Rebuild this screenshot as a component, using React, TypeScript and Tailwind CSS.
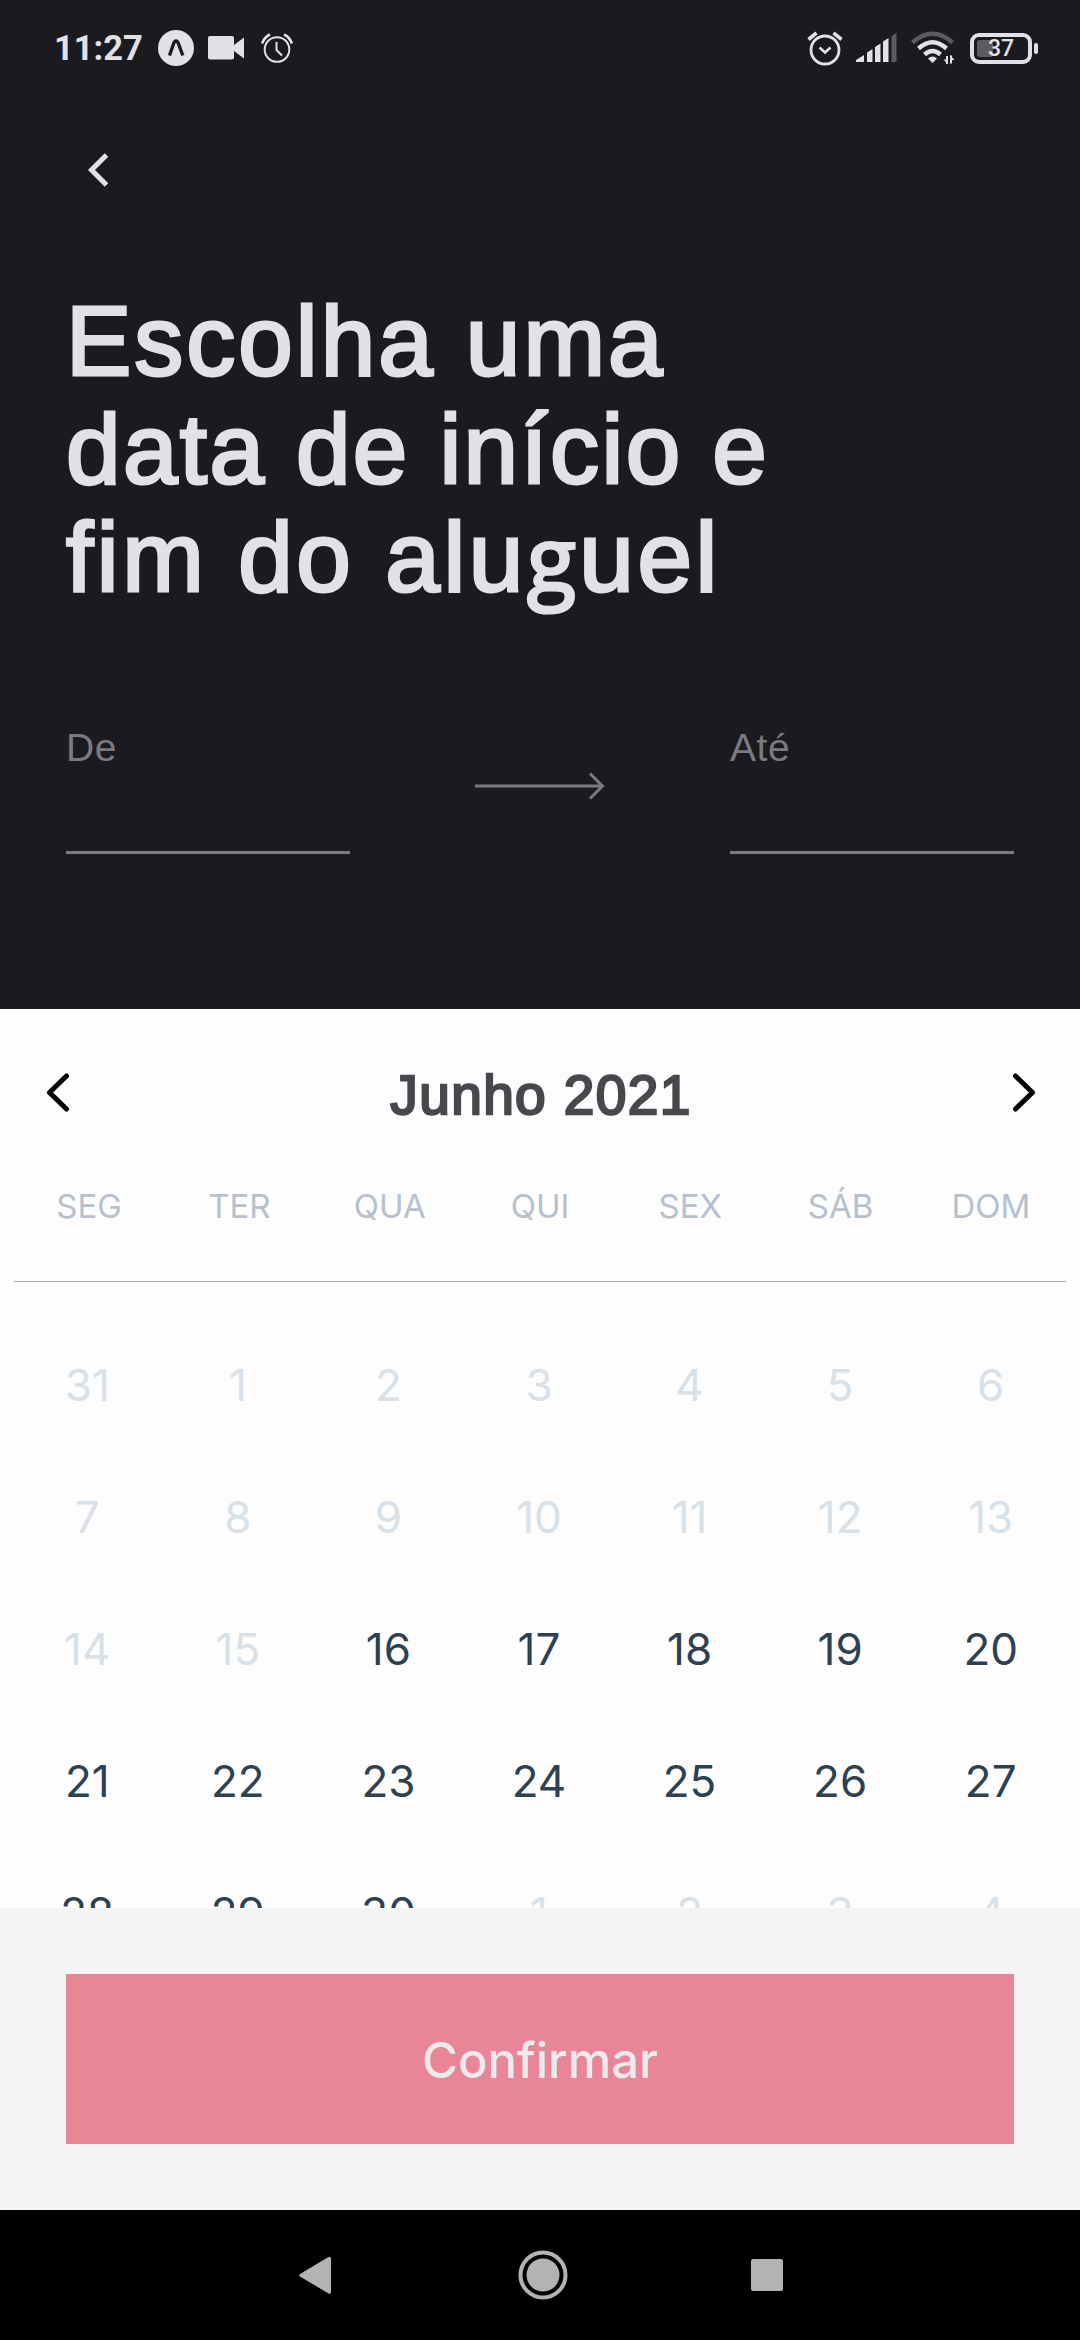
import React from "react";

const weekDays = ["SEG", "TER", "QUA", "QUI", "SEX", "SÁB", "DOM"];

const weeks = [
  [31, 1, 2, 3, 4, 5, 6],
  [7, 8, 9, 10, 11, 12, 13],
  [14, 15, 16, 17, 18, 19, 20],
  [21, 22, 23, 24, 25, 26, 27],
  [28, 29, 30, 1, 2, 3, 4],
];

function isEnabled(week: number, day: number) {
  if (week < 2) return false;
  if (week === 4) return day > 4;
  return day >= 16;
}

function StatusBar() {
  return (
    <div className="flex h-24 items-center justify-between pr-[42px] pl-[54px] text-[#e1e1e6]">
      <div className="flex items-center">
        <span className="w-[90px] pt-px font-['Roboto',sans-serif] text-[34.5px] leading-none font-bold whitespace-nowrap">11:27</span>
        <svg className="ml-[14px] size-9" viewBox="0 0 36 36">
          <circle cx="18" cy="18" r="18" fill="currentColor" />
          <path d="M11.5 25.5 L16 12.5 Q18 9.5 20 12.5 L24.8 25.5" fill="none" stroke="#1b1b1f" strokeWidth="3.4" strokeLinejoin="round" />
        </svg>
        <svg className="ml-[14px] h-6 w-9" viewBox="0 0 36 24" fill="currentColor">
          <rect width="26" height="23.5" rx="2" />
          <path d="M26 9 L36 1.5 V22.5 L26 15 Z" />
        </svg>
        <svg className="ml-[17px] h-[30px] w-8" viewBox="0 0 32 30" fill="none" stroke="currentColor" strokeWidth="2">
          <circle cx="16" cy="16.5" r="12.3" />
          <path d="M15.5 9 V17 L21 22.5" />
          <path d="M1 10.5 Q3.5 4 9 1.5 M23 1.5 Q28.5 4 31 10.5" strokeWidth="2.6" />
        </svg>
      </div>
      <div className="flex items-center">
        <svg className="h-[35px] w-[36px]" viewBox="0 0 36 35" fill="none" stroke="currentColor">
          <circle cx="18" cy="19" r="14" strokeWidth="2.8" />
          <path d="M12.5 16.5 L18 21.5 L23.5 16.5" strokeWidth="2.6" />
          <path d="M1.5 8.5 L9.5 1.8 M26.5 1.8 L34.5 8.5" strokeWidth="3.6" />
        </svg>
        <svg className="ml-[13px] h-[30px] w-[41px]" viewBox="0 0 41 30" fill="currentColor">
          <path d="M0 29 V27 L8 22 V29 Z M11 29 V19.5 L16.5 16 V29 Z M19 29 V14 L24.5 10.5 V29 Z M27 29 V8.5 L32.5 5 V29 Z" />
          <path d="M35.5 29 V3 L40.5 0 V29 Z" fill="#5b5b60" />
        </svg>
        <svg className="ml-[14px] h-[34px] w-11" viewBox="0 0 44 34" fill="none" stroke="currentColor" strokeWidth="4.4">
          <path d="M1.5 11.5 Q21.5 -6 41.5 11.5" stroke="#5b5b60" />
          <path d="M7.5 17.5 Q21.5 5 35.5 17.5" />
          <path d="M13.5 23.5 Q21.5 16.5 29.5 23.5" />
          <path d="M17 27.5 Q21.5 23.5 26 27.5 L21.5 32 Z" fill="currentColor" stroke="none" />
          <path d="M36 33 V25 M40 24.5 V32.5" strokeWidth="2" />
          <path d="M32.5 28.5 H37 V33.5 Z M39 24 L43.5 29 H39 Z" fill="currentColor" stroke="none" />
        </svg>
        <div className="ml-[15px] flex items-center gap-[2px]">
          <div className="relative flex h-[31px] w-[62px] items-center justify-center rounded-[9px] border-[4px] border-[#e1e1e6]">
            <div className="absolute top-[3px] left-[3px] h-[17px] w-[16px] rounded-[3px] bg-[#5b5b60]" />
            <span className="relative pt-px font-['Roboto',sans-serif] text-[23px] leading-none font-medium">37</span>
          </div>
          <div className="h-[11px] w-1 rounded-sm bg-[#e1e1e6]" />
        </div>
      </div>
    </div>
  );
}

function Chevron({ right = false }: { right?: boolean }) {
  return (
    <svg className="h-[39px] w-6" viewBox="0 0 24 39" fill="none" stroke="#000" strokeWidth="5" strokeLinecap="round" strokeLinejoin="round">
      <path d={right ? "M3.5 3 L20.5 19.5 L3.5 36" : "M20.5 3 L3.5 19.5 L20.5 36"} />
    </svg>
  );
}

function DateField({ label }: { label: string }) {
  return (
    <div className="flex h-[128px] w-[284px] flex-col border-b-[3px] border-[#7a7a80]">
      <span className="text-[39px] leading-[44px] tracking-[0.6px] text-[#7a7a80]">{label}</span>
    </div>
  );
}

export default function App() {
  return (
    <div className="flex h-[2340px] w-[1080px] flex-col overflow-hidden bg-[#fdfdfe] font-['Liberation_Sans',sans-serif]">
      <header className="flex h-[1009px] flex-col bg-[#1b1b1f]">
        <StatusBar />
        <div className="flex h-[148px] pt-[56px] pl-[87px]">
          <svg className="h-9 w-6" viewBox="0 0 24 36" fill="none" stroke="#e1e1e6" strokeWidth="5">
            <path d="M19.5 3 L4.5 18 L19.5 33" />
          </svg>
        </div>
        <h1 className="mt-[43px] flex flex-col pl-[66px] text-[98px] leading-[108px] whitespace-nowrap text-[#e1e1e6] [-webkit-text-stroke:3px_#e1e1e6]">
          <span className="h-[108px] tracking-[3px]">Escolha uma</span>
          <span className="h-[108px] tracking-[2.4px]">data de início e</span>
          <span className="h-[108px] tracking-[3.6px]">
            fim do alu<span className="font-['Open_Sans',sans-serif] text-[90px] leading-none font-medium">g</span>uel
          </span>
        </h1>
        <div className="mt-[115px] flex justify-between px-[66px]">
          <DateField label="De" />
          <svg className="mt-[46px] h-7 w-[130px]" viewBox="0 0 130 28" fill="none" stroke="#7a7a80" strokeWidth="3">
            <path d="M0 14 H127 M115 1.5 L127.5 14 L115 26.5" />
          </svg>
          <DateField label="Até" />
        </div>
      </header>

      <main className="flex h-[899px] flex-col overflow-hidden">
        <div className="mt-[62px] flex h-[42px] items-center justify-between pr-[44px] pl-[46px]">
          <Chevron />
          <h2 className="mt-[6px] text-[55px] leading-none tracking-[1.4px] whitespace-nowrap text-[#47474d] [-webkit-text-stroke:2.4px_#47474d]">Junho 2021</h2>
          <Chevron right />
        </div>
        <div className="mx-[14px] mt-[60px] grid h-[109px] shrink-0 grid-cols-7 border-b border-[#aeaeb3] pt-[9px] font-['Inter',sans-serif] text-[33px] text-[#b6c1cd]">
          {weekDays.map((d) => (
            <span key={d} className="text-center leading-[48px]">{d}</span>
          ))}
        </div>
        <div className="mt-[37px] mr-[14px] ml-[12px] flex shrink-0 flex-col font-['Inter',sans-serif] text-[44px]">
          {weeks.map((week, i) => (
            <div key={i} className="grid h-[132px] grid-cols-7 items-center">
              {week.map((d) => (
                <span key={d} className={isEnabled(i, d) ? "text-center text-[#2d4150]" : "text-center text-[#d9e1e8]"}>{d}</span>
              ))}
            </div>
          ))}
        </div>
      </main>

      <footer className="flex h-[302px] flex-col bg-[#f4f4f5] px-[66px] pt-[66px]">
        <button className="h-[170px] bg-[#e88596] pt-[4px] font-['Inter',sans-serif] text-[49px] font-medium text-[#ebebee]">Confirmar</button>
      </footer>

      <nav className="flex h-[130px] items-center bg-black">
        <svg className="ml-[299px] h-10 w-8" viewBox="0 0 32 40" fill="#b3b3b3">
          <path d="M1 19 Q-0.5 20 1 21.5 L29.5 38.5 Q32 39.5 32 37 V3.5 Q32 1 29.5 2 Z" />
        </svg>
        <svg className="ml-[187px] size-[50px]" viewBox="0 0 50 50">
          <circle cx="25" cy="25" r="22.5" fill="none" stroke="#b3b3b3" strokeWidth="4" />
          <circle cx="25" cy="25" r="16.5" fill="#b3b3b3" />
        </svg>
        <div className="ml-[183px] size-8 rounded-[2px] bg-[#b3b3b3]" />
      </nav>
    </div>
  );
}
